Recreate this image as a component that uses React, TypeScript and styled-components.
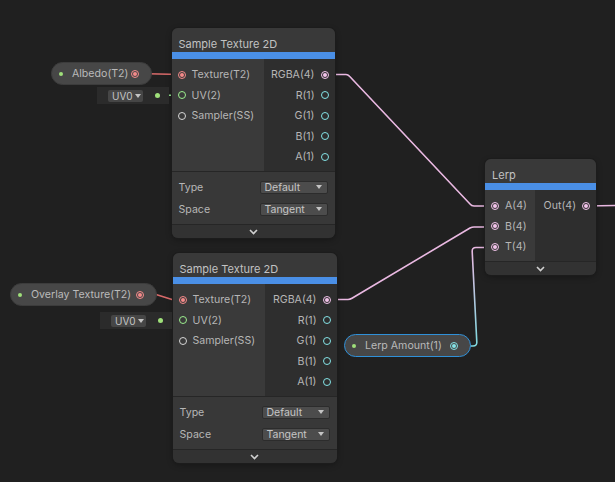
import React from "react";
import styled, { createGlobalStyle } from "styled-components";

const GlobalStyle = createGlobalStyle`
  html, body {
    margin: 0;
    padding: 0;
    background: #202020;
  }
  body {
    font-family: Inter, "Noto Sans", sans-serif;
  }
`;

const palette = {
  texture: "#f48a8a",
  vector4: "#f2c3ea",
  vector2: "#9cee8e",
  vector1: "#84e3e6",
  sampler: "#d6d6d6",
  dot: "#9fe07a",
};

const Canvas = styled.div`
  position: relative;
  width: 615px;
  height: 482px;
  overflow: hidden;
  background: #202020;
`;

const Wires = styled.svg`
  position: absolute;
  left: 0;
  top: 0;
`;

const NodeBox = styled.div<{ $x: number; $y: number; $w: number }>`
  position: absolute;
  left: ${(p) => p.$x}px;
  top: ${(p) => p.$y}px;
  width: ${(p) => p.$w}px;
  border-radius: 6px;
  overflow: hidden;
  background: #2e2e2e;
  box-shadow: 0 0 0 1px #1c1c1c, 0 2px 6px rgba(0, 0, 0, 0.3);
`;

const Title = styled.div`
  height: 24px;
  padding: 8px 7px 0;
  box-sizing: border-box;
  background: #393939;
  color: #c2c2c2;
  font-size: 11px;
  line-height: 16px;
  white-space: nowrap;
`;

const Accent = styled.div`
  height: 7px;
  background: #4a8fe6;
`;

const PortArea = styled.div`
  display: flex;
`;

const InputCol = styled.div<{ $w: number }>`
  width: ${(p) => p.$w}px;
  padding: 5.5px 0 4px;
  background: #3a3a3a;
`;

const OutputCol = styled.div`
  flex: 1;
  padding: 5.5px 0 4px;
  background: #2e2e2e;
`;

const PortRow = styled.div<{ $out?: boolean }>`
  height: 20.5px;
  display: flex;
  align-items: center;
  gap: 6px;
  flex-direction: ${(p) => (p.$out ? "row-reverse" : "row")};
  padding: ${(p) => (p.$out ? "0 6px 0 0" : "0 0 0 6px")};
  color: #b6b6b6;
  font-size: 10.6px;
  white-space: nowrap;
`;

const Port = styled.span<{ $color: string; $filled?: boolean }>`
  position: relative;
  flex: none;
  box-sizing: border-box;
  width: 8px;
  height: 8px;
  border: 1.5px solid ${(p) => p.$color};
  border-radius: 50%;
  &::after {
    content: "";
    position: absolute;
    inset: 1px;
    border-radius: 50%;
    background: ${(p) => (p.$filled ? p.$color : "transparent")};
  }
`;

const Settings = styled.div`
  padding: 4px 7px;
  background: #383838;
  border-top: 1px solid #262626;
`;

const SettingRow = styled.div`
  height: 22px;
  display: flex;
  align-items: center;
  justify-content: space-between;
  color: #b6b6b6;
  font-size: 10.6px;
`;

const Dropdown = styled.div`
  width: 68px;
  height: 13px;
  box-sizing: border-box;
  display: flex;
  align-items: center;
  justify-content: space-between;
  padding: 0 5px 0 4px;
  background: #4c4c4c;
  border: 1px solid #2c2c2c;
  border-radius: 2px;
  color: #c6c6c6;
  font-size: 10.5px;
`;

const Caret = styled.span`
  width: 0;
  height: 0;
  border-left: 3.5px solid transparent;
  border-right: 3.5px solid transparent;
  border-top: 4px solid #c4c4c4;
`;

const Footer = styled.div`
  height: 13px;
  display: flex;
  align-items: center;
  justify-content: center;
  background: #323232;
  border-top: 1px solid #262626;
`;

const Pill = styled.div<{ $x: number; $y: number; $w: number; $selected?: boolean }>`
  position: absolute;
  left: ${(p) => p.$x}px;
  top: ${(p) => p.$y}px;
  width: ${(p) => p.$w}px;
  height: 23px;
  box-sizing: border-box;
  display: flex;
  align-items: center;
  padding: 0 12px 0 7px;
  border-radius: 12px;
  background: #474747;
  border: 1px solid ${(p) => (p.$selected ? "#2f90d8" : "#3c3c3c")};
  color: #bababa;
  font-size: 10.6px;
  white-space: nowrap;
`;

const PillDot = styled.span`
  width: 4px;
  height: 4px;
  border-radius: 50%;
  background: ${palette.dot};
  margin-right: 9px;
  flex: none;
`;

const PillLabel = styled.span`
  flex: 1;
`;

const UvSlot = styled.div<{ $x: number; $y: number }>`
  position: absolute;
  left: ${(p) => p.$x}px;
  top: ${(p) => p.$y}px;
  width: 72px;
  height: 17px;
  box-sizing: border-box;
  display: flex;
  align-items: center;
  padding: 0 9px 0 11px;
  gap: 12px;
  background: #2b2b2b;
`;

const UvButton = styled.div`
  width: 36px;
  height: 12px;
  box-sizing: border-box;
  display: flex;
  align-items: center;
  justify-content: space-between;
  padding: 0 2px 0 4px;
  background: #464646;
  border-radius: 2px;
  color: #c4c4c4;
  font-size: 10px;
`;

const SlotDot = styled.span`
  width: 5px;
  height: 5px;
  border-radius: 50%;
  background: ${palette.dot};
  flex: none;
`;

type PortDef = { label: string; color: string; filled?: boolean };

const Chevron = () => (
  <svg width="9" height="6" viewBox="0 0 9 6">
    <path d="M1 1 L4.5 4.5 L8 1" fill="none" stroke="#d0d0d0" strokeWidth="1.6" />
  </svg>
);

interface NodeProps {
  x: number;
  y: number;
  w: number;
  inW: number;
  title: string;
  inputs: PortDef[];
  outputs: PortDef[];
  settings?: { label: string; value: string }[];
}

const GraphNode: React.FC<NodeProps> = ({ x, y, w, inW, title, inputs, outputs, settings }) => (
  <NodeBox $x={x} $y={y} $w={w}>
    <Title>{title}</Title>
    <Accent />
    <PortArea>
      <InputCol $w={inW}>
        {inputs.map((p) => (
          <PortRow key={p.label}>
            <Port $color={p.color} $filled={p.filled} />
            {p.label}
          </PortRow>
        ))}
      </InputCol>
      <OutputCol>
        {outputs.map((p) => (
          <PortRow $out key={p.label}>
            <Port $color={p.color} $filled={p.filled} />
            {p.label}
          </PortRow>
        ))}
      </OutputCol>
    </PortArea>
    {settings && (
      <Settings>
        {settings.map((s) => (
          <SettingRow key={s.label}>
            {s.label}
            <Dropdown>
              {s.value}
              <Caret />
            </Dropdown>
          </SettingRow>
        ))}
      </Settings>
    )}
    <Footer>
      <Chevron />
    </Footer>
  </NodeBox>
);

const sampleInputs: PortDef[] = [
  { label: "Texture(T2)", color: palette.texture, filled: true },
  { label: "UV(2)", color: palette.vector2 },
  { label: "Sampler(SS)", color: palette.sampler },
];

const sampleOutputs: PortDef[] = [
  { label: "RGBA(4)", color: palette.vector4, filled: true },
  { label: "R(1)", color: palette.vector1 },
  { label: "G(1)", color: palette.vector1 },
  { label: "B(1)", color: palette.vector1 },
  { label: "A(1)", color: palette.vector1 },
];

const sampleSettings = [
  { label: "Type", value: "Default" },
  { label: "Space", value: "Tangent" },
];

const lerpInputs: PortDef[] = [
  { label: "A(4)", color: palette.vector4, filled: true },
  { label: "B(4)", color: palette.vector4, filled: true },
  { label: "T(4)", color: palette.vector4, filled: true },
];

const EdgeLayer = () => (
  <Wires width="615" height="482" viewBox="0 0 615 482">
    <defs>
      <linearGradient id="lerpAmount" x1="0" y1="250" x2="0" y2="345" gradientUnits="userSpaceOnUse">
        <stop offset="0" stopColor="#e9b9e2" />
        <stop offset="1" stopColor="#7fd9e0" />
      </linearGradient>
    </defs>
    <g fill="none" strokeWidth="1.6" strokeLinejoin="round">
      <path d="M135 73.5 L182 74.5" stroke="#d96a6a" />
      <path d="M142 294 L156 294.5 L172 299.5 L183 299.5" stroke="#d96a6a" />
      <path d="M158 95.3 L181 95.3" stroke="#8ee08a" strokeDasharray="3 2" />
      <path d="M158 320.5 L183 320.5" stroke="#8ee08a" strokeDasharray="3 2" />
      <path d="M324 74.5 L346 74.5 Q348 74.5 349.5 76.3 L470 204 Q471.5 206 474 206 L496 206" stroke="#eab9e2" />
      <path d="M326 299.5 L348 299.5 Q350 299.5 352 298.3 L470 228 Q472 227 474 227 L496 227" stroke="#eab9e2" />
      <path d="M453 346 L473 346 Q477 346 476.8 342 L472.2 251.5 Q472 247.5 476 247.5 L496 247.5" stroke="url(#lerpAmount)" />
      <path d="M586 206 L615 205.5" stroke="#eab9e2" />
    </g>
  </Wires>
);

const App: React.FC = () => (
  <>
    <GlobalStyle />
    <Canvas>
      <EdgeLayer />
      <GraphNode
        x={171.5}
        y={28}
        w={163}
        inW={92}
        title="Sample Texture 2D"
        inputs={sampleInputs}
        outputs={sampleOutputs}
        settings={sampleSettings}
      />
      <GraphNode
        x={172.5}
        y={253}
        w={164}
        inW={92}
        title="Sample Texture 2D"
        inputs={sampleInputs}
        outputs={sampleOutputs}
        settings={sampleSettings}
      />
      <GraphNode
        x={485}
        y={159}
        w={111}
        inW={50}
        title="Lerp"
        inputs={lerpInputs}
        outputs={[{ label: "Out(4)", color: palette.vector4, filled: true }]}
      />
      <Pill $x={51} $y={62} $w={101}>
        <PillDot />
        <PillLabel>Albedo(T2)</PillLabel>
        <Port $color={palette.texture} $filled />
      </Pill>
      <Pill $x={10} $y={283} $w={147}>
        <PillDot />
        <PillLabel>Overlay Texture(T2)</PillLabel>
        <Port $color={palette.texture} $filled />
      </Pill>
      <Pill $x={344} $y={334} $w={127} $selected>
        <PillDot />
        <PillLabel>Lerp Amount(1)</PillLabel>
        <Port $color={palette.vector1} $filled />
      </Pill>
      <UvSlot $x={97} $y={87}>
        <UvButton>
          UV0
          <Caret />
        </UvButton>
        <SlotDot />
      </UvSlot>
      <UvSlot $x={100} $y={312}>
        <UvButton>
          UV0
          <Caret />
        </UvButton>
        <SlotDot />
      </UvSlot>
    </Canvas>
  </>
);

export default App;
